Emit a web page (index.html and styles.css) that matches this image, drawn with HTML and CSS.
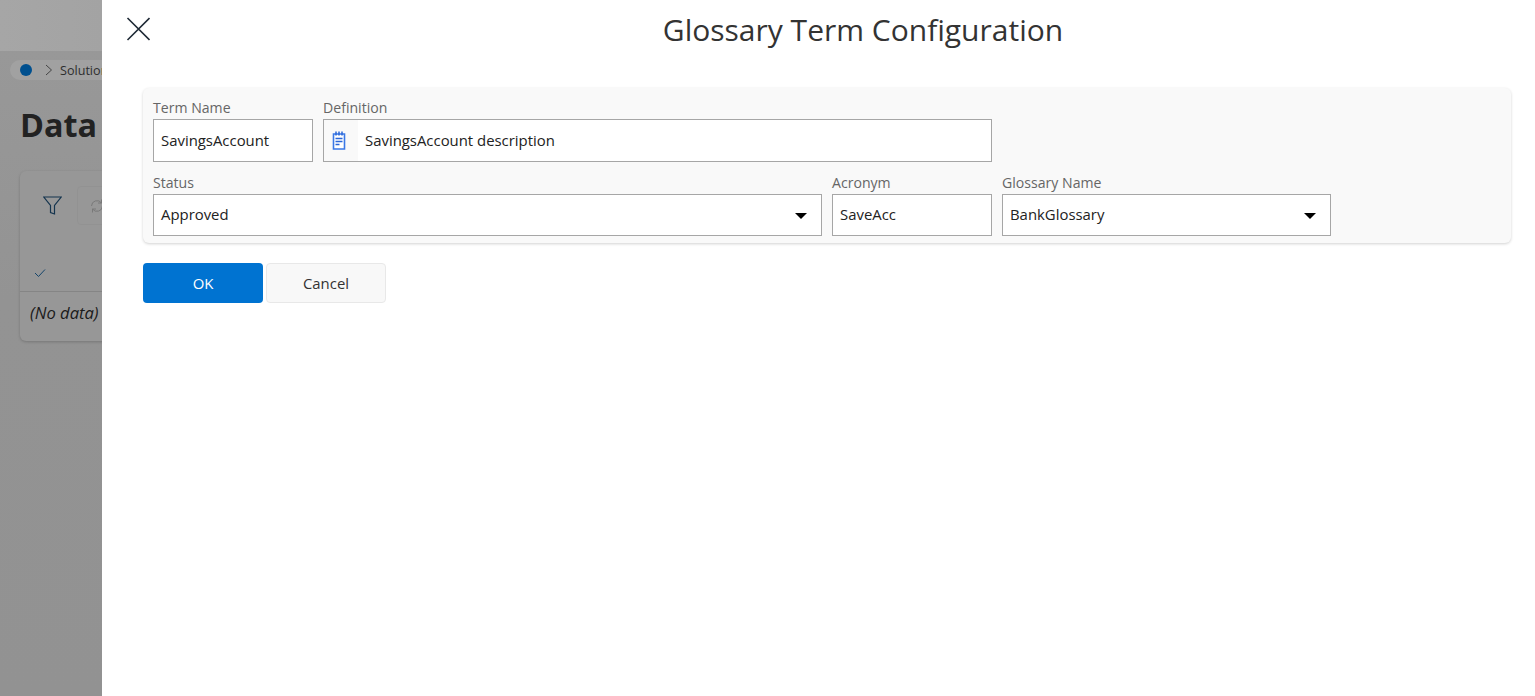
FILE: index.html
```html
<!DOCTYPE html>
<html lang="en">
<head>
<meta charset="utf-8">
<title>Glossary Term Configuration</title>
<link rel="stylesheet" href="styles.css">
</head>
<body>
<div class="page">
  <div class="under">
    <div class="under-top"></div>
    <div class="crumb"><span class="crumb-dot"></span><svg class="crumb-sep" width="8" height="12" viewBox="0 0 8 12"><path d="M1 1l5.500 5-5.500 5" fill="none" stroke="#444" stroke-width="1"/></svg><span>Solution</span></div>
    <h2 class="under-title">Data</h2>
    <div class="under-card">
      <div class="under-tools">
        <svg class="funnel" width="19" height="20" viewBox="0 0 19 20"><path d="M.8 1h17.400l-6.700 8.500V18l-4-1.500V9.500z" fill="none" stroke="#15354f" stroke-width="1.200"/></svg>
        <div class="under-btn"><svg width="16" height="16" viewBox="0 0 16 16"><path d="M2.500 8a5.500 5.500 0 0 1 10-3M13.500 8a5.500 5.500 0 0 1-10 3M12.500 1.500V5H9M3.500 14.500V11H7" fill="none" stroke="#666" stroke-width="1"/></svg></div>
      </div>
      <div class="under-head"><svg width="12" height="10" viewBox="0 0 12 10"><path d="M1 5l3.500 3.500L11 1.500" fill="none" stroke="#15456b" stroke-width="1"/></svg></div>
      <div class="under-row">(No data)</div>
    </div>
  </div>
  <div class="panel">
    <header class="panel-head">
      <button class="close" aria-label="Close"><svg width="24" height="24" viewBox="0 0 24 24"><path d="M1.500 1l22 22M23.500 1L1.500 23" fill="none" stroke="#1f2a36" stroke-width="1.600"/></svg></button>
      <h1 class="panel-title">Glossary Term Configuration</h1>
    </header>
    <section class="form-card">
      <div class="form-row">
        <div class="field w-160"><label>Term Name</label><div class="box">SavingsAccount</div></div>
        <div class="field w-669"><label>Definition</label>
          <div class="box box-icon">
            <span class="addon"><svg width="14" height="19" viewBox="0 0 14 19"><path d="M1.500 3h11v15h-11z" fill="#fff" stroke="#3a78e6" stroke-width="1.600"/><path d="M4 .5v4M7 .5v4M10 .5v4M3.500 7.500h7M3.500 10.500h7M3.500 13.500h4" fill="none" stroke="#2a66d8" stroke-width="1.500"/></svg></span>
            <span class="addon-text">SavingsAccount description</span>
          </div>
        </div>
      </div>
      <div class="form-row">
        <div class="field w-669"><label>Status</label><div class="box box-select short">Approved<span class="caret"></span></div></div>
        <div class="field w-160"><label>Acronym</label><div class="box short">SaveAcc</div></div>
        <div class="field w-329"><label>Glossary Name</label><div class="box box-select short">BankGlossary<span class="caret"></span></div></div>
      </div>
    </section>
    <div class="actions">
      <button class="btn btn-primary">OK</button>
      <button class="btn btn-default">Cancel</button>
    </div>
  </div>
</div>
</body>
</html>
```
FILE: styles.css
```css
* { box-sizing: border-box; }
html, body { margin: 0; height: 100%; overflow: hidden; }
body { font-family: "Open Sans", "Liberation Sans", sans-serif; font-size: 14.9px; color: #222; }
.page { display: flex; height: 696px; background: #fff; }
.under {
  width: 102px; flex: none; height: 696px; overflow: hidden;
  background: linear-gradient(180deg, #999 0, #939393 300px, #929292 100%);
}
.under-top { height: 51px; background: linear-gradient(90deg, #a6a6a6 0, #a3a3a3 100%); }
.crumb {
  display: flex; align-items: center; width: 130px; height: 20px; margin: 9px 0 0 10px;
  padding-left: 10px; border-radius: 10px; background: #a1a1a1; font-size: 12.6px; color: #2e2e2e; white-space: nowrap;
}
.crumb-dot { width: 12px; height: 12px; border-radius: 50%; background: #00508f; }
.crumb-sep { margin: 0 7px 0 13px; }
.under-title { margin: 22px 0 0 20px; font-size: 32.4px; line-height: 44px; font-weight: 700; color: #222; white-space: nowrap; }
.under-card { width: 300px; height: 170px; margin: 25px 0 0 20px; border-radius: 6px; background: #979797; box-shadow: 0 1px 3px rgba(0,0,0,.2); }
.under-tools { display: flex; align-items: center; height: 69px; padding-left: 23px; }
.under-btn { display: flex; align-items: center; justify-content: center; width: 40px; height: 39px; margin-left: 15px; border: 1px solid #909090; border-radius: 4px; opacity: .6; }
.under-head { height: 52px; padding: 28px 0 0 14px; border-bottom: 1px solid #858585; }
.under-head svg { display: block; }
.under-row { padding-left: 10px; height: 49px; line-height: 42px; font-style: italic; font-size: 16.6px; color: #1b1b1b; }
.panel { flex: 1; min-width: 0; background: #fff; padding: 0 24px 0 41px; }
.panel-head { position: relative; height: 88px; padding-left: 72px; text-align: center; }
.close { position: absolute; left: -17px; top: 17px; width: 25px; height: 24px; padding: 0; border: 0; background: none; }
.close svg { display: block; }
.panel-title { margin: 0; padding-top: 8px; font-size: 30px; line-height: 44px; font-weight: 400; color: #333; }
.form-card { height: 155px; padding: 10px; background: #f9f9f9; border-radius: 6px; box-shadow: 0 1px 3px rgba(0,0,0,.18); }
.form-row { display: flex; gap: 10px; }
.form-row + .form-row { margin-top: 11px; }
.field label { display: block; height: 21px; line-height: 20px; font-size: 14.1px; color: #666; }
.w-160 { width: 160px; }
.w-669 { width: 669px; }
.w-329 { width: 329px; }
.box { position: relative; display: flex; align-items: center; height: 43px; padding: 0 7px 2px; border: 1px solid #a6a6a6; background: #fff; color: #222; white-space: nowrap; }
.box.short { height: 42px; }
.box-icon { padding: 0; }
.addon { display: flex; align-items: center; justify-content: center; width: 34px; height: 100%; padding-right: 4px; background: #f9f9f9; flex: none; }
.addon-text { padding: 0 0 2px 7px; }
.caret { position: absolute; right: 14px; top: 18px; width: 0; height: 0; border-left: 6px solid transparent; border-right: 6px solid transparent; border-top: 6px solid #000; }
.actions { display: flex; gap: 3px; margin-top: 20px; }
.btn { width: 120px; height: 40px; padding: 0 0 1px; border-radius: 4px; font: inherit; cursor: pointer; }
.btn-primary { background: #0073d1; border: 0; color: #fff; }
.btn-default { background: #f8f8f8; border: 1px solid #e8e8e8; color: #333; }
```
